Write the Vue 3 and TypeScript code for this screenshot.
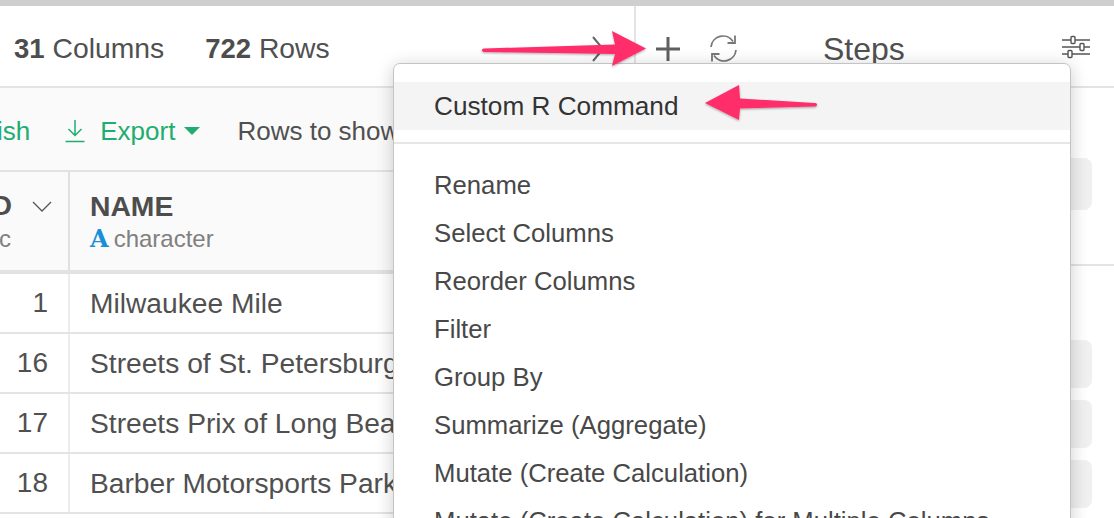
<script setup lang="ts">
interface Row { id: number; name: string }
const rows: Row[] = [
  { id: 1, name: 'Milwaukee Mile' },
  { id: 16, name: 'Streets of St. Petersburg' },
  { id: 17, name: 'Streets Prix of Long Beach' },
  { id: 18, name: 'Barber Motorsports Park' },
]
const items: string[] = [
  'Rename', 'Select Columns', 'Reorder Columns', 'Filter', 'Group By',
  'Summarize (Aggregate)', 'Mutate (Create Calculation)', 'Mutate (Create Calculation) for Multiple Columns',
]
</script>

<template>
  <div class="page">
    <div class="topbar"></div>
    <div class="panes">
      <section class="left">
        <header class="summary">
          <span class="stat"><b>31</b> Columns</span>
          <span class="stat"><b>722</b> Rows</span>
          <svg class="more" width="14" height="28" viewBox="0 0 14 28"><path d="M2 2l10 12L2 26" fill="none" stroke="#666" stroke-width="2"/></svg>
        </header>
        <div class="toolbar">
          <span class="green publish">Publish</span>
          <svg class="export-icon" width="20" height="24" viewBox="0 0 20 24" fill="none" stroke="#1fad70" stroke-width="1.500">
            <path d="M10 1v15M3.500 10l6.500 6.500 6.500-6.500M0.500 22.500h19"/>
          </svg>
          <span class="green export">Export</span>
          <i class="caret"></i>
          <span class="rows-label">Rows to show</span>
        </div>
        <div class="thead">
          <div class="cell-id head-id">
            <div class="id-top"><b>ID</b>
              <svg width="20" height="11" viewBox="0 0 20 11"><path d="M1 1l9 9 9-9" fill="none" stroke="#555" stroke-width="1.300"/></svg>
            </div>
            <div class="id-type">numeric</div>
          </div>
          <div class="cell-name">
            <b class="col-title">NAME</b>
            <div class="col-type"><span class="type-a">A</span>character</div>
          </div>
        </div>
        <div v-for="r in rows" :key="r.id" class="row">
          <div class="cell-id num">{{ r.id }}</div>
          <div class="cell-name text">{{ r.name }}</div>
        </div>
      </section>
      <aside class="right">
        <header class="steps-head">
          <svg class="plus" width="24" height="24" viewBox="0 0 24 24"><path d="M12 0v24M0 12h24" stroke="#5f5f5f" stroke-width="3"/></svg>
          <svg class="refresh" width="29" height="29" viewBox="0 0 29 29" fill="none" stroke="#777" stroke-width="1.800">
            <path d="M2 13A12 12 0 0 1 24 7.500M27 16A12 12 0 0 1 5 21.500"/>
            <path d="M26 1.500v7.500h-7.500M3 27.500V20h7.500"/>
          </svg>
          <span class="steps-title">Steps</span>
          <svg class="sliders" width="28" height="24" viewBox="0 0 28 24" fill="#fff" stroke="#555" stroke-width="1.400">
            <path d="M0 5h28M0 12h28M0 19h28" stroke-width="1.600"/>
            <rect x="9" y="1.500" width="4" height="7" rx="1"/>
            <rect x="18" y="8.500" width="4" height="7" rx="1"/>
            <rect x="6" y="15.500" width="4" height="7" rx="1"/>
          </svg>
        </header>
        <div class="steps-body">
          <div class="card first"></div>
          <div class="divider"></div>
          <div class="card c2"></div>
          <div class="card c3"></div>
          <div class="card c3"></div>
        </div>
      </aside>
    </div>

    <div class="menu">
      <div class="menu-item active">Custom R Command</div>
      <hr class="sep" />
      <div v-for="it in items" :key="it" class="menu-item">{{ it }}</div>
    </div>

    <svg class="arrow arrow-main" width="172" height="60" viewBox="0 0 172 60">
      <defs>
        <filter id="sh" x="-10%" y="-20%" width="120%" height="150%"><feDropShadow dx="0" dy="1" stdDeviation="1" flood-color="#000" flood-opacity=".35"/></filter>
      </defs>
      <path filter="url(#sh)" d="M2 22C2 21 3 20.500 5 20.500L135 16.500L132 3L166 20.500L132 38L135 26L5 24C3 24 2 23.500 2 22Z" fill="#ff2f6b"/>
    </svg>
    <svg class="arrow arrow-menu" width="130" height="46" viewBox="0 0 130 46">
      <path filter="url(#sh)" d="M125 20.500C125 19.500 124 19 122 19L48 14.500L47 1L13 19L47 36L48 24.500L122 22.500C124 22.500 125 22 125 20.500Z" fill="#ff2f6b"/>
    </svg>
  </div>
</template>

<style>
html, body { margin: 0; background: #fff; overflow: hidden; }
</style>

<style scoped>
.page {
  position: relative;
  width: 1114px;
  height: 518px;
  overflow: hidden;
  background: #fff;
  font-family: "Liberation Sans", Arial, sans-serif;
  color: #505050;
}
.topbar { height: 6px; background: #cfcfcf; }
.panes { display: flex; height: 512px; }
.left { width: 636px; flex: none; overflow: hidden; }
.summary {
  height: 82px;
  box-sizing: border-box;
  border-bottom: 2px solid #e4e4e4;
  border-right: 2px solid #e4e4e4;
  display: flex;
  align-items: center;
  padding-left: 14px;
  gap: 41px;
  font-size: 28.300px;
  position: relative;
}
.stat { margin-top: 5px; }
.stat b { color: #4d4d4d; font-size: 27.500px; }
.more { position: absolute; left: 591px; top: 29px; }
.toolbar {
  height: 84px;
  box-sizing: border-box;
  background: #fafafa;
  border-bottom: 2px solid #e2e2e2;
  display: flex;
  align-items: center;
  font-size: 26px;
  white-space: nowrap;
  padding-top: 4px;
}
.green { color: #1fad70; }
.publish { margin-left: -55px; }
.export-icon { margin-left: 35px; }
.export { margin-left: 15px; }
.caret {
  margin-left: 9px;
  width: 0; height: 0;
  border-left: 8px solid transparent;
  border-right: 8px solid transparent;
  border-top: 8px solid #1fad70;
}
.rows-label { margin-left: 37px; }
.thead {
  display: flex;
  height: 102px;
  box-sizing: border-box;
  background: #fafafa;
  border-bottom: 4px solid #e2e2e2;
}
.cell-id { width: 70px; box-sizing: border-box; flex: none; border-right: 2px solid #ececec; overflow: hidden; }
.head-id { border-right: 2px solid #e0e0e0; display: flex; flex-direction: column; align-items: flex-end; padding-top: 19px; padding-right: 16px; }
.id-top { display: flex; align-items: center; gap: 20px; font-size: 28px; height: 30px; white-space: nowrap; }
.id-top b { color: #4d4d4d; }
.id-type { font-size: 24px; color: #808080; margin-right: 41px; margin-top: 4px; white-space: nowrap; }
.cell-name { flex: 1; padding-left: 20px; white-space: nowrap; }
.thead .cell-name { padding-top: 19px; }
.col-title { display: block; font-size: 28.300px; height: 30px; line-height: 30px; color: #4d4d4d; }
.col-type { font-size: 24px; color: #808080; margin-top: 3px; display: flex; align-items: baseline; }
.type-a { font-family: "DejaVu Serif", serif; font-weight: 700; font-size: 24px; color: #1a8fd8; margin-right: 6px; letter-spacing: -1px; }
.row { display: flex; height: 60px; box-sizing: border-box; border-bottom: 2px solid #e4e4e4; }
.row .cell-id { display: flex; align-items: center; justify-content: flex-end; padding-right: 20px; font-size: 28px; }
.row .text { display: flex; align-items: center; font-size: 28.200px; }
.right { flex: 1; position: relative; }
.steps-head {
  height: 82px;
  box-sizing: border-box;
  border-bottom: 2px solid #e4e4e4;
  position: relative;
}
.plus { position: absolute; left: 20px; top: 31px; }
.refresh { position: absolute; left: 73px; top: 28px; }
.steps-title { position: absolute; left: 187px; top: 25px; font-size: 32px; }
.sliders { position: absolute; left: 426px; top: 29px; }
.steps-body { display: flex; flex-direction: column; padding-right: 22px; }
.card { background: #f0f0f0; border-radius: 8px; }
.first { height: 52px; margin-top: 70px; }
.divider { height: 2px; background: #e4e4e4; margin: 54px -22px 0 0; }
.c2 { height: 48px; margin-top: 74px; }
.c3 { height: 48px; margin-top: 12px; }
.menu {
  position: absolute;
  left: 393px;
  top: 63px;
  width: 678px;
  height: 520px;
  box-sizing: border-box;
  background: #fff;
  border: 1px solid #c4c4c4;
  border-radius: 7px;
  padding-top: 18px;
  box-shadow: 0 3px 18px rgba(0, 0, 0, 0.2);
}
.menu-item {
  height: 48px;
  line-height: 48px;
  padding-left: 40px;
  font-size: 25.700px;
  color: #484848;
  white-space: nowrap;
}
.menu-item.active { background: #f4f4f4; color: #333; font-size: 26.200px; }
.sep { border: 0; height: 2px; background: #e6e6e6; margin: 12px 0 17px; }
.arrow { position: absolute; overflow: visible; }
.arrow-main { left: 480px; top: 28px; }
.arrow-menu { left: 692px; top: 84px; }
</style>
